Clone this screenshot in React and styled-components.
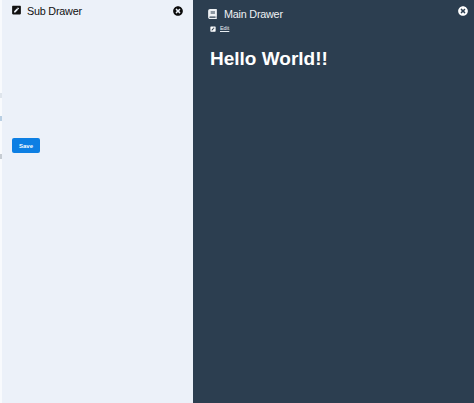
import React from "react";
import styled, { createGlobalStyle } from "styled-components";
import { FaPenSquare, FaBook, FaTimesCircle } from "react-icons/fa";

const Global = createGlobalStyle`
  html, body { margin: 0; padding: 0; height: 100%; background: #2c3e50; overflow: hidden; }
  body { font-family: "Liberation Sans", Arial, sans-serif; }
  #root { height: 100%; }
`;

const Page = styled.div`
  display: flex;
  width: 474px;
  height: 403px;
`;

const Strip = styled.div`
  position: relative;
  width: 2px;
  flex: none;
  background: #f8fafd;
`;

const Tick = styled.span`
  position: absolute;
  left: 0;
  top: ${(p) => p.$top}px;
  width: 2px;
  height: 5px;
  background: ${(p) => p.$color};
`;

const SubDrawer = styled.section`
  position: relative;
  width: 191px;
  flex: none;
  box-sizing: border-box;
  padding: 5px 10px 0;
  background: #ecf1f9;
  color: #111;
  display: flex;
  flex-direction: column;
`;

const MainDrawer = styled.section`
  position: relative;
  flex: 1;
  box-sizing: border-box;
  padding: 8px 15px 0 15px;
  background: #2c3e50;
  color: #fff;
`;

const Header = styled.header`
  display: flex;
  align-items: center;
  gap: ${(p) => p.$gap}px;
  height: 13px;
  font-size: 10.8px;
  letter-spacing: -0.22px;
  line-height: 13px;
  color: ${(p) => p.$color};
`;

const HeaderIcon = styled.span`
  display: flex;
  width: 9px;
  justify-content: center;
  font-size: 10px;
  margin-top: ${(p) => p.$lift}px;
`;

const CloseButton = styled.button`
  position: absolute;
  top: ${(p) => p.$top}px;
  right: ${(p) => p.$right}px;
  display: flex;
  padding: 0;
  border: 0;
  background: none;
  color: ${(p) => p.$color};
  font-size: 10px;
`;

const SaveButton = styled.button`
  width: 28px;
  height: 15px;
  margin-top: 120px;
  padding: 0;
  border: 0;
  border-radius: 2px;
  background: #0d7fe3;
  color: #fff;
  font-family: inherit;
  font-size: 6px;
  font-weight: 700;
`;

const EditLink = styled.a`
  display: flex;
  align-items: center;
  gap: 4px;
  margin: 4px 0 0 2px;
  color: #e8edf2;
  font-size: 5.4px;
  line-height: 7px;
  text-decoration: underline;
  svg { font-size: 6px; color: #fff; }
`;

const Title = styled.h1`
  margin: 15px 0 0 2px;
  font-size: 19px;
  line-height: 24px;
  font-weight: 700;
  color: #fff;
`;

export default function App() {
  return (
    <Page>
      <Global />
      <Strip>
        <Tick $top={93} $color="#dfe5ec" />
        <Tick $top={116} $color="#b9cfe3" />
        <Tick $top={154} $color="#c6ccd3" />
      </Strip>
      <SubDrawer>
        <Header $gap={6} $color="#111">
          <HeaderIcon $lift={-3}><FaPenSquare /></HeaderIcon>
          Sub Drawer
        </Header>
        <CloseButton $top={6} $right={10} $color="#0c0c0c" aria-label="Close"><FaTimesCircle /></CloseButton>
        <SaveButton>Save</SaveButton>
      </SubDrawer>
      <MainDrawer>
        <Header $gap={7} $color="#eef1f4">
          <HeaderIcon $lift={-2}><FaBook /></HeaderIcon>
          Main Drawer
        </Header>
        <CloseButton $top={6} $right={6} $color="#fff" aria-label="Close"><FaTimesCircle /></CloseButton>
        <EditLink href="#"><FaPenSquare />Edit</EditLink>
        <Title>Hello World!!</Title>
      </MainDrawer>
    </Page>
  );
}
